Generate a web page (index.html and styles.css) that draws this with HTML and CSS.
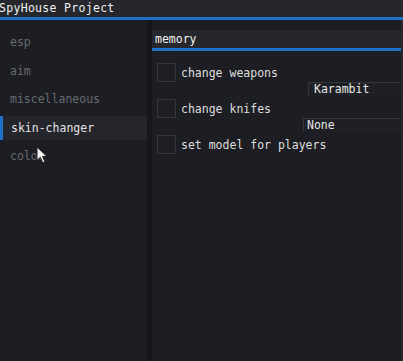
FILE: index.html
```html
<!DOCTYPE html>
<html lang="en">
<head>
    <meta charset="UTF-8">
    <meta name="viewport" content="width=device-width, initial-scale=1.0">
    <title>SpyHouse Project</title>
    <link rel="stylesheet" href="styles.css">
</head>
<body>
    <div class="titlebar">SpyHouse Project</div>

    <div class="main">
        <div class="sidebar">
            <div class="tab-item">esp</div>
            <div class="tab-item">aim</div>
            <div class="tab-item">miscellaneous</div>
            <div class="tab-item active">skin-changer</div>
            <div class="tab-item">color</div>
        </div>

        <div class="divider"></div>

        <div class="content">
            <div class="section-tab">memory</div>

            <div class="option">
                <span class="checkbox"></span>
                <span>change weapons</span>
            </div>
            <div class="combo combo-wide">Karambit</div>

            <div class="option">
                <span class="checkbox"></span>
                <span>change knifes</span>
            </div>
            <div class="combo combo-narrow">None</div>

            <div class="option">
                <span class="checkbox"></span>
                <span>set model for players</span>
            </div>
        </div>
    </div>

    <!-- mouse pointer -->
    <svg class="cursor" width="14" height="18" viewBox="0 0 14 18">
        <path d="M1 1 L1 14.5 L4.3 11.3 L6.8 16.8 L9 15.8 L6.6 10.4 L11 10.4 Z" fill="#f2f2f2" stroke="#1a1a1a" stroke-width="1"/>
    </svg>
</body>
</html>
```

FILE: styles.css
```css
body {
    margin: 0;
    width: 403px;
    height: 361px;
    overflow: hidden;
    background-color: #1c1d22;
    font-family: "DejaVu Sans Mono", "Liberation Mono", monospace;
    font-size: 11.5px;
    color: #dedede;
    position: relative;
}
.titlebar {
    height: 17px;
    line-height: 16px;
    background-color: #25272d;
    border-bottom: 3px solid #1f70c6;
    color: #f0f0f0;
    letter-spacing: 0.3px;
    margin-left: -1px;
}
.main {
    display: flex;
    height: 341px;
}
.sidebar {
    width: 147px;
    padding-top: 10px;
    background-color: #1d1e23;
}
.tab-item {
    height: 24px;
    line-height: 24px;
    margin-bottom: 4.5px;
    padding-left: 10px;
    color: #686a70;
}
.tab-item.active {
    background-color: #24262c;
    color: #e4e4e4;
    box-shadow: inset 3px 0 0 #1f70c6;
    padding-left: 11px;
}
.divider {
    width: 5px;
    background-color: #16171b;
}
.content {
    flex: 1;
    padding-top: 10px;
    background-color: #1d1e23;
    border-right: 2px solid #26282e;
}
.section-tab {
    height: 18px;
    line-height: 18px;
    background-color: #25272d;
    border-bottom: 3px solid #1f70c6;
    padding-left: 3px;
    color: #f0f0f0;
    margin-bottom: 12px;
}
.option {
    display: flex;
    align-items: center;
    gap: 5px;
    height: 19px;
    padding-left: 5px;
}
.checkbox {
    width: 17px;
    height: 17px;
    border: 1px solid #33353b;
    background-color: #1e1f24;
}
.combo {
    height: 13px;
    line-height: 13px;
    border-top: 1px solid #33353b;
    border-left: 1px solid #33353b;
    background-color: #1f2025;
    margin-bottom: 3px;
    color: #e8e8e8;
}
.combo-wide {
    margin-left: 156px;
    padding-left: 5px;
}
.combo-narrow {
    margin-left: 151px;
    padding-left: 3px;
}
.cursor {
    position: absolute;
    left: 36px;
    top: 146px;
}
```
